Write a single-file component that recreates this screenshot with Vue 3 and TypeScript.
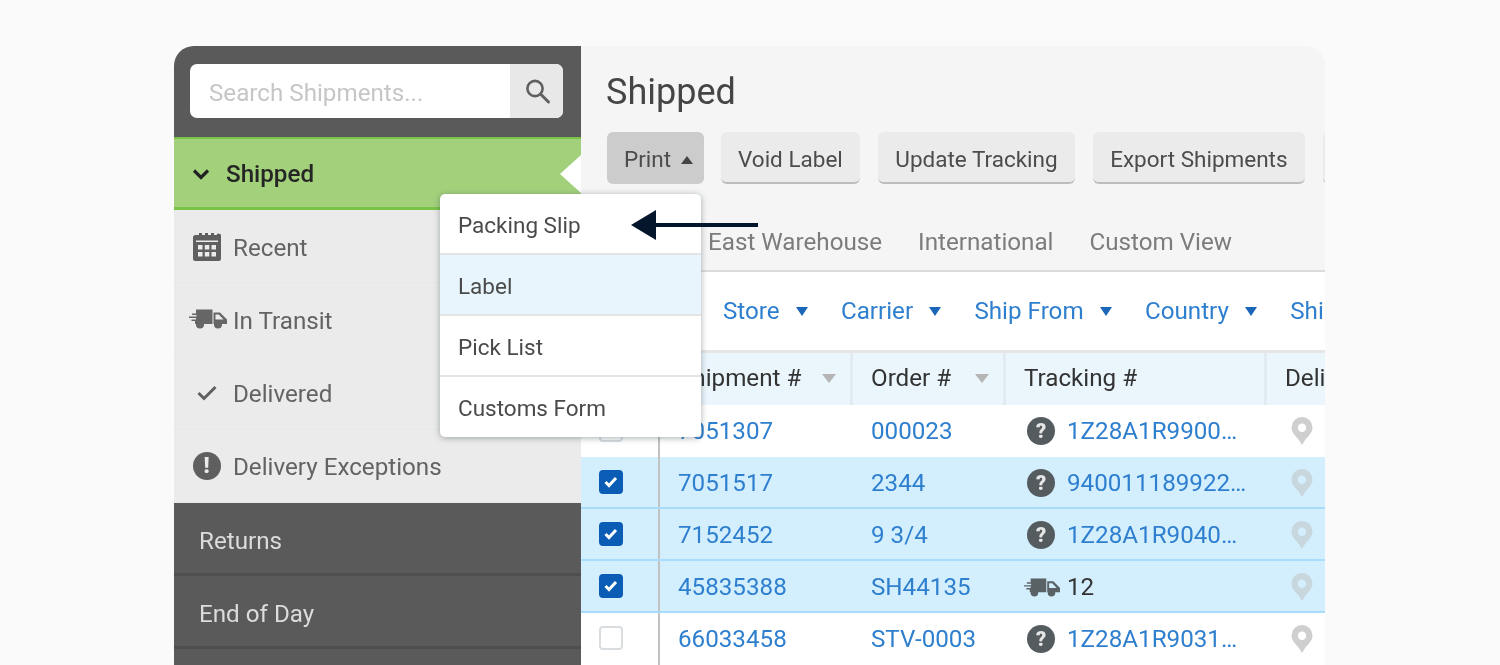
<template>
  <div class="card">
    <aside class="sidebar">
      <div class="search-area">
        <div class="search-box">
          <span class="search-text">Search Shipments...</span>
          <span class="search-btn">
            <svg width="28" height="28" viewBox="0 0 28 28" fill="none" stroke="#5f5f5f" stroke-width="2.6">
              <circle cx="12" cy="11.500" r="7.600" />
              <path d="M17.500 17l8 8" stroke-linecap="round" stroke-width="3" />
            </svg>
          </span>
        </div>
      </div>

      <div class="nav-active">
        <svg class="chevron" width="18" height="12" viewBox="0 0 18 12" fill="none" stroke="#222" stroke-width="3.200">
          <path d="M2 2.500l7 7 7-7" />
        </svg>
        <span>Shipped</span>
      </div>

      <div v-for="item in navItems" :key="item.label" class="nav-item">
        <span class="nav-icon">
          <svg v-if="item.icon === 'calendar'" width="28" height="29" viewBox="0 0 28 29">
            <path fill="#5f5f5f" fill-rule="evenodd" d="M3 3h3V1h3v2h3V1h3v2h3V1h3v2h2.500A2.500 2.500 0 0 1 28 5.500v21a2.500 2.500 0 0 1-2.500 2.500h-23A2.500 2.500 0 0 1 0 26.500v-21A2.500 2.500 0 0 1 3 3zM3 8.500V10h22V8.500zM5 13v4.500h4.500V13zm6.800 0v4.500h4.500V13zm6.700 0v4.500H23V13zM5 20v4.500h4.500V20zm6.800 0v4.500h4.500V20zm6.700 0v4.500H23V20z" />
          </svg>
          <svg v-else-if="item.icon === 'truck'" class="truck truck-nav" viewBox="0 0 38 20">
            <path fill-rule="evenodd" :d="truckPath" />
            <circle cx="11" cy="15.500" r="4" />
            <circle cx="29" cy="15.500" r="4" />
          </svg>
          <svg v-else-if="item.icon === 'check'" width="20" height="16" viewBox="0 0 20 16" fill="none" stroke="#5f5f5f" stroke-width="3">
            <path d="M1.500 8l5.500 5.500L18.500 2" />
          </svg>
          <span v-else class="alert-badge">!</span>
        </span>
        <span class="nav-label">{{ item.label }}</span>
      </div>

      <div v-for="item in darkItems" :key="item" class="nav-dark">{{ item }}</div>
      <div class="nav-dark"></div>
    </aside>

    <main class="content">
      <h1 class="title">Shipped</h1>

      <div class="actions">
        <button class="btn btn-open">Print<span class="up-caret"></span></button>
        <button v-for="label in actions" :key="label" class="btn">{{ label }}</button>
        <button class="btn btn-cut"></button>
      </div>

      <div class="tabs">
        <span v-for="tab in tabs" :key="tab">{{ tab }}</span>
      </div>

      <div class="panel">
        <div class="filters">
          <span v-for="filter in filters" :key="filter" class="filter">
            {{ filter }}<span class="down-caret"></span>
          </span>
          <span class="filter">Shi</span>
        </div>

        <div class="row head">
          <div class="cell"></div>
          <div class="cell">Shipment #<span class="sort-caret"></span></div>
          <div class="cell">Order #<span class="sort-caret"></span></div>
          <div class="cell">Tracking #</div>
          <div class="cell">Deli</div>
        </div>

        <div v-for="row in rows" :key="row.shipment" class="row" :class="{ selected: row.checked }">
          <div class="cell check-cell">
            <span class="checkbox" :class="{ checked: row.checked }">
              <svg v-if="row.checked" width="14" height="12" viewBox="0 0 14 12" fill="none" stroke="#fff" stroke-width="3">
                <path d="M1.500 6l3.500 3.500 7-7.500" />
              </svg>
            </span>
          </div>
          <div class="cell link">{{ row.shipment }}</div>
          <div class="cell link">{{ row.order }}</div>
          <div class="cell tracking">
            <template v-if="row.transit">
              <svg class="truck truck-row" viewBox="0 0 38 20">
                <path fill-rule="evenodd" :d="truckPath" />
                <circle cx="11" cy="15.500" r="4" />
                <circle cx="29" cy="15.500" r="4" />
              </svg>
              <span class="count">{{ row.tracking }}</span>
            </template>
            <template v-else>
              <span class="help-badge">?</span>
              <span class="link">{{ row.tracking }}</span>
            </template>
          </div>
          <div class="cell">
            <svg class="pin" width="24" height="30" viewBox="0 0 24 30">
              <path fill-rule="evenodd" d="M12 1a10.500 10.500 0 0 1 10.500 10.500c0 6-5.500 9.500-8 13.500L12 29l-2.500-4C7 21 1.500 17.500 1.500 11.500A10.500 10.500 0 0 1 12 1zm0 6.500a4.200 4.200 0 1 0 0 8.400 4.200 4.200 0 0 0 0-8.400z" />
            </svg>
          </div>
        </div>
      </div>
    </main>

    <div class="menu">
      <div v-for="(entry, i) in menuItems" :key="entry" class="menu-item" :class="{ hover: i === 1 }">{{ entry }}</div>
    </div>

    <svg class="arrow" width="127" height="32" viewBox="0 0 127 32">
      <path fill="#04162c" d="M0 16L25 1v13h102v4H25v13z" />
    </svg>
  </div>
</template>

<script setup lang="ts">
interface ShipmentRow {
  shipment: string;
  order: string;
  tracking: string;
  checked: boolean;
  transit?: boolean;
}

// box with speed lines on the left, cab with a window on the right
const truckPath =
  'M7 0.500h16.500V15H6v-3H2.500v-1.500H7V9H0V7.500h7.500V6H3V4.500h4zM24.500 3.500h6.500l7 7V15H24.500zM26.500 5.500v5h8L29.800 5.500z';

const navItems = [
  { label: 'Recent', icon: 'calendar' },
  { label: 'In Transit', icon: 'truck' },
  { label: 'Delivered', icon: 'check' },
  { label: 'Delivery Exceptions', icon: 'alert' }
];
const darkItems = ['Returns', 'End of Day'];
const actions = ['Void Label', 'Update Tracking', 'Export Shipments'];
const tabs = ['East Warehouse', 'International', 'Custom View'];
const filters = ['Store', 'Carrier', 'Ship From', 'Country'];
const menuItems = ['Packing Slip', 'Label', 'Pick List', 'Customs Form'];

const rows: ShipmentRow[] = [
  { shipment: '7051307', order: '000023', tracking: '1Z28A1R9900…', checked: false },
  { shipment: '7051517', order: '2344', tracking: '940011189922…', checked: true },
  { shipment: '7152452', order: '9 3/4', tracking: '1Z28A1R9040…', checked: true },
  { shipment: '45835388', order: 'SH44135', tracking: '12', checked: true, transit: true },
  { shipment: '66033458', order: 'STV-0003', tracking: '1Z28A1R9031…', checked: false }
];
</script>

<style>
html,
body {
  margin: 0;
  background: #fafafa;
  overflow: hidden;
}
</style>

<style scoped>
.card {
  position: relative;
  display: flex;
  width: 1151px;
  height: 619px;
  margin: 46px 0 0 174px;
  border-radius: 20px 20px 0 0;
  overflow: hidden;
  font-family: Roboto, "Liberation Sans", sans-serif;
  font-size: 24.200px;
  filter: blur(0.600px);
}

.sidebar {
  width: 407px;
  flex-shrink: 0;
  background: #ebebeb;
}

.search-area {
  height: 91px;
  box-sizing: border-box;
  padding: 18px 18px 0 16px;
  background: #5a5a5a;
}

.search-box {
  display: flex;
  height: 54px;
  background: #fff;
  border-radius: 7px;
  overflow: hidden;
}

.search-text {
  flex: 1;
  padding-left: 19px;
  line-height: 58px;
  color: #c6c6c6;
}

.search-btn {
  display: flex;
  align-items: center;
  justify-content: center;
  width: 53px;
  background: #e8e8e8;
}

.nav-active {
  position: relative;
  display: flex;
  align-items: center;
  gap: 16px;
  height: 73px;
  box-sizing: border-box;
  padding: 2px 0 0 18px;
  background: #a3d17b;
  border-top: 2px solid #78c348;
  border-bottom: 3px solid #78c348;
  font-weight: 500;
  color: #252525;
}

.nav-active::after {
  content: "";
  position: absolute;
  top: 16px;
  right: 0;
  width: 21px;
  height: 38px;
  background: #fff;
  clip-path: polygon(100% 0, 0 50%, 100% 100%);
}

.nav-item {
  display: flex;
  align-items: center;
  height: 73.250px;
  color: #636363;
  border-bottom: 1px solid #e8e8e8;
  box-sizing: border-box;
}

.nav-label {
  padding-top: 3px;
}

.nav-icon {
  display: flex;
  align-items: center;
  justify-content: center;
  width: 59px;
  padding-left: 6px;
  box-sizing: border-box;
  flex-shrink: 0;
}

.truck {
  flex-shrink: 0;
  fill: #666;
}

.truck-nav {
  width: 38px;
  height: 20px;
  margin-left: 2px;
}

.alert-badge {
  width: 28px;
  height: 28px;
  border-radius: 50%;
  background: #5f5f5f;
  color: #ebebeb;
  font-weight: 900;
  font-size: 22px;
  line-height: 28px;
  text-align: center;
}

.nav-dark {
  height: 73px;
  box-sizing: border-box;
  padding-left: 25px;
  line-height: 77px;
  background: #5a5a5a;
  color: #dcdcdc;
  border-bottom: 3px solid #4f4f4f;
}

.content {
  flex: 1;
  min-width: 0;
  background: #f5f5f5;
  overflow: hidden;
}

.title {
  margin: 0;
  padding: 23px 0 0 25px;
  height: 64px;
  box-sizing: border-box;
  font-size: 36px;
  line-height: 46px;
  font-weight: 400;
  color: #454545;
}

.actions {
  display: flex;
  gap: 17.500px;
  padding: 22px 0 0 26px;
  white-space: nowrap;
}

.btn {
  height: 52px;
  padding: 3px 17.500px 0;
  border: 0;
  border-bottom: 2px solid #bdbdbd;
  border-radius: 6px;
  background: #ebebeb;
  font: inherit;
  font-size: 22.500px;
  color: #4c4c4c;
  flex-shrink: 0;
}

.btn-open {
  width: 97px;
  padding: 3px 0 0 17px;
  text-align: left;
  background: #cccccc;
  border-bottom-color: #cccccc;
  margin-right: -1px;
}

.btn-cut {
  width: 40px;
}

.up-caret {
  display: inline-block;
  width: 0;
  height: 0;
  margin: 0 0 3px 10px;
  border-left: 6.500px solid transparent;
  border-right: 6.500px solid transparent;
  border-bottom: 8px solid #444;
}

.tabs {
  display: flex;
  gap: 36px;
  height: 88px;
  box-sizing: border-box;
  padding: 43px 0 0 127px;
  line-height: 30px;
  color: #7c7c7c;
  border-bottom: 2px solid #dcdcdc;
}

.panel {
  background: #fff;
}

.filters {
  display: flex;
  height: 78px;
  box-sizing: border-box;
  padding: 24px 0 0 142px;
  white-space: nowrap;
  line-height: 30px;
  color: #2f7fcf;
  overflow: hidden;
}

.filter {
  display: inline-flex;
  align-items: center;
  flex-shrink: 0;
  height: 30px;
  margin-right: 33.300px;
}

.filter:last-child {
  margin-right: 0;
}

.down-caret {
  width: 0;
  height: 0;
  margin-left: 16px;
  border-left: 6.500px solid transparent;
  border-right: 6.500px solid transparent;
  border-top: 9px solid #1a66b8;
}

.row {
  display: grid;
  grid-template-columns: 79px 193px 153px 261px 1fr;
  height: 52px;
  box-sizing: border-box;
  white-space: nowrap;
}

.row.selected {
  background: #d3effe;
  border-bottom: 2px solid #a9dbfb;
}

.head {
  height: 55px;
  background: #eaf5fc;
  border-top: 3px solid #e6e6e6;
  color: #333;
}

.head .cell {
  padding-top: 0;
  padding-bottom: 2px;
  border-right: 3px solid #e2ebf0;
}

.head .cell:first-child {
  background: #fff;
  border-right: 2px solid #c2c2c2;
}

.head .cell:last-child {
  border-right: 0;
}

.cell {
  display: flex;
  align-items: center;
  min-width: 0;
  padding: 0 0 0 18px;
  box-sizing: border-box;
}

.selected .cell {
  padding-top: 2px;
}

.check-cell {
  border-right: 2px solid #c2c2c2;
  background: #fff;
}

.selected .check-cell {
  background: transparent;
}

.link {
  color: #2f7fcf;
}

.checkbox {
  display: flex;
  align-items: center;
  justify-content: center;
  width: 24px;
  height: 24px;
  margin-top: -3px;
  box-sizing: border-box;
  border: 2px solid #d9dde0;
  border-radius: 4px;
  background: #fff;
}

.checkbox.checked {
  background: #0b5cb5;
  border-color: #0b5cb5;
}

.sort-caret {
  width: 0;
  height: 0;
  margin-left: auto;
  margin-right: 14px;
  border-left: 7px solid transparent;
  border-right: 7px solid transparent;
  border-top: 9px solid #b5b5b5;
}

.tracking {
  gap: 12px;
  padding-left: 21px;
}

.help-badge {
  width: 28px;
  height: 28px;
  flex-shrink: 0;
  border-radius: 50%;
  background: #555c60;
  color: #e6e6e6;
  font-size: 20px;
  font-weight: 900;
  line-height: 28px;
  text-align: center;
}

.truck-row {
  width: 36px;
  height: 19px;
  margin-left: -3px;
  margin-right: -5px;
  fill: #5a6266;
}

.count {
  color: #333;
}

.pin {
  margin-left: 5px;
  fill: #cfcfcf;
}

.selected .pin {
  fill: #c8d6dd;
}

.menu {
  position: absolute;
  top: 148px;
  left: 266px;
  width: 261px;
  background: #fff;
  border-radius: 5px;
  box-shadow: 0 1px 6px rgba(60, 70, 80, 0.45);
  overflow: hidden;
  font-size: 22.500px;
}

.menu-item {
  height: 61px;
  box-sizing: border-box;
  padding-left: 18px;
  line-height: 62px;
  color: #4a4a4a;
  border-bottom: 2px solid #e4e4e4;
}

.menu-item:last-child {
  height: 60px;
  border-bottom: 0;
}

.menu-item.hover {
  background: #e9f5fc;
}

.arrow {
  position: absolute;
  top: 163px;
  left: 457px;
}
</style>
